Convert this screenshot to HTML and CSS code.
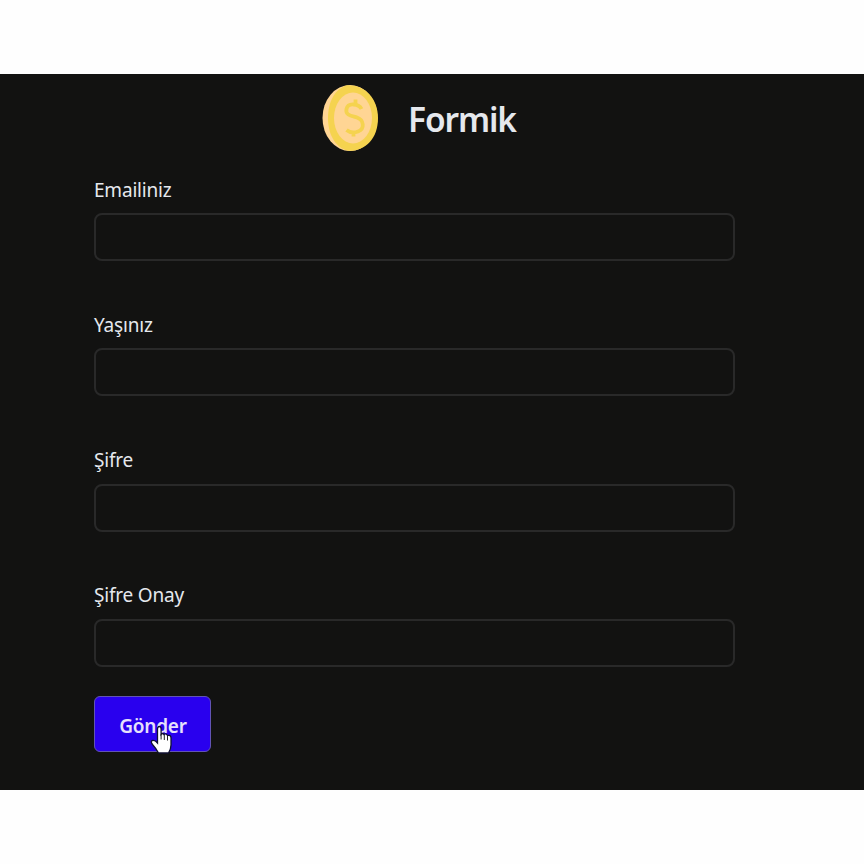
FILE: index.html
```html
<!DOCTYPE html>
<html lang="tr">
<head>
<meta charset="utf-8">
<title>Formik</title>
<link rel="stylesheet" href="styles.css">
</head>
<body>
<main class="panel">
  <header class="header">
    <svg class="coin" viewBox="0 0 58 68" aria-hidden="true">
      <ellipse cx="28" cy="34" rx="27.5" ry="33" fill="#ffd594"/>
      <path d="M25 1.2C41 .2 56 13 56 34S43 67.5 26 66.8C12 63 6 49 6 34S12 5 25 1.2Z" fill="#f5d34f"/>
      <ellipse cx="31" cy="34" rx="19" ry="25.500" fill="#ffd594"/>
      <path d="M39.500 25C37 20 26 18 24.500 25C23 32 31 32 35 33.500C42 36 43 45 36 47.500C31 49.500 27 48 24.500 46M33.500 15.500V21M31.500 48V52.500" fill="none" stroke="#f5d34f" stroke-width="3.800"/>
    </svg>
    <h1 class="title">Formik</h1>
  </header>
  <form class="form">
    <div class="field">
      <label class="label" for="email">Emailiniz</label>
      <input class="input" id="email" type="email">
    </div>
    <div class="field">
      <label class="label" for="age">Yaşınız</label>
      <input class="input" id="age" type="text">
    </div>
    <div class="field">
      <label class="label" for="password">Şifre</label>
      <input class="input" id="password" type="password">
    </div>
    <div class="field">
      <label class="label" for="confirm">Şifre Onay</label>
      <input class="input" id="confirm" type="password">
    </div>
    <button class="submit" type="button">Gönder
      <svg class="cursor" viewBox="0 0 24 30" aria-hidden="true">
        <path d="M8.500 4Q8.500 1.500 10.300 1.500T12.100 4V9.500Q13.500 7.500 15 9.500Q17 8 18.500 10.500Q22 9.500 22 13V20Q22 24 19.500 28H9.500Q7.500 24 3.500 19.500Q1 16 3.500 15.500Q6 15 8.500 18Z" fill="#fff" stroke="#101030" stroke-width="1.300"/>
        <path d="M12.100 9V14.500M15.300 10V15M18.500 11V15.500" fill="none" stroke="#222" stroke-width="1"/>
      </svg>
    </button>
  </form>
</main>
</body>
</html>
```
FILE: styles.css
```css
* { box-sizing: border-box; }

body {
  margin: 0;
  padding-top: 74px;
  background: #fefefe;
  font-family: "Noto Sans", "Open Sans", sans-serif;
}

.panel {
  height: 716px;
  padding: 10px 129px 0 94px;
  background: #121211;
  color: #e5e8ed;
}

.header {
  display: flex;
  align-items: center;
  gap: 28px;
  height: 68px;
  padding-left: 228px;
}

.coin { width: 58px; height: 68px; }

.title {
  margin: 2px 0 0;
  font-size: 33.5px;
  line-height: 44px;
  font-weight: 600;
  letter-spacing: -1.1px;
}

.form { padding-top: 24px; }

.field { height: 135.3px; }

.field:nth-child(4) { height: 114.5px; }

.label {
  display: block;
  height: 37px;
  padding-top: 0.6px;
  font-size: 19px;
  line-height: 26px;
  letter-spacing: -0.2px;
}

.input {
  display: block;
  width: 641px;
  height: 48px;
  padding: 0 16px;
  border: 2px solid #292929;
  border-radius: 8px;
  background: transparent;
  color: inherit;
  font: inherit;
  outline: none;
}

.submit {
  position: relative;
  display: block;
  width: 117px;
  height: 56px;
  margin: 0;
  padding: 3px 0 0 1px;
  border: 1px solid #6254b4;
  border-radius: 6px;
  background: #2900ee;
  color: #e6e0fc;
  font: 600 19px/26px "Noto Sans", "Open Sans", sans-serif;
  letter-spacing: -0.2px;
}

.cursor {
  position: absolute;
  left: 54px;
  top: 28px;
  width: 24px;
  height: 30px;
}
```
